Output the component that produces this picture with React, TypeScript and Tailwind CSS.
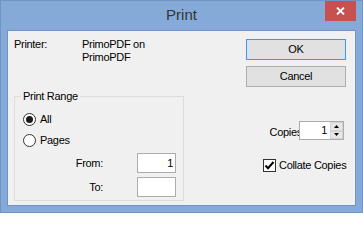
import React from "react";

function Radio({ checked }: { checked?: boolean }) {
  return (
    <div className="w-[13px] h-[13px] rounded-full border border-[#333333] bg-white flex items-center justify-center shrink-0">
      {checked && <div className="w-[7px] h-[7px] rounded-full bg-[#1a1a1a]" />}
    </div>
  );
}

export default function App() {
  return (
    <div className="w-[363px] h-[213px] bg-[#85aad8] border border-[#7094c6] flex flex-col font-['Liberation_Sans',Arial,sans-serif]">
      <div className="relative h-[29px] flex justify-center shrink-0">
        <span className="text-[15px] leading-[27px] text-[#333333]">Print</span>
        <div className="absolute top-0 right-[6px] w-[31px] h-[20px] bg-[#c75050] flex items-center justify-center">
          <svg width="9" height="8" viewBox="0 0 9 8">
            <path d="M1 0.5 L8 7.5 M8 0.5 L1 7.5" stroke="white" strokeWidth="1.8" />
          </svg>
        </div>
      </div>
      <div className="mx-[6px] mb-[6px] flex-1 border border-[#7094c6] bg-[#f0f0f0] flex text-[11px] leading-[13px] text-black tracking-[-0.3px]">
        <div className="pl-[6px] pt-[7px] flex flex-col">
          <div className="flex">
            <div className="w-[68px]">Printer:</div>
            <div>
              PrimoPDF on
              <br />
              PrimoPDF
            </div>
          </div>
          <fieldset className="mt-[26px] w-[170px] border border-[#dcdcdc] pl-[8px] pb-[3px]">
            <legend className="ml-[-2px] px-[2px] leading-[12px]">Print Range</legend>
            <div className="mt-[11px] flex items-center gap-[4px] h-[13px]">
              <Radio checked />
              <span>All</span>
            </div>
            <div className="mt-[8px] flex items-center gap-[4px] h-[13px]">
              <Radio />
              <span>Pages</span>
            </div>
            <div className="mt-[6px] flex items-center">
              <div className="w-[80px] text-right">From:</div>
              <div className="ml-[34px] w-[39px] h-[20px] border border-[#acacac] bg-white text-right pr-[2px] leading-[18px]">1</div>
            </div>
            <div className="mt-[4px] flex items-center">
              <div className="w-[80px] text-right">To:</div>
              <div className="ml-[34px] w-[39px] h-[20px] border border-[#acacac] bg-white" />
            </div>
          </fieldset>
        </div>
        <div className="ml-auto mr-[9px] w-[100px] pt-[8px] flex flex-col">
          <div className="h-[21px] border border-[#3399ff] bg-[#e1e1e1] flex items-center justify-center">OK</div>
          <div className="mt-[6px] h-[21px] border border-[#adadad] bg-[#e1e1e1] flex items-center justify-center">Cancel</div>
          <div className="mt-[34px] h-[19px] flex justify-end items-center pr-[2px]">
            <span className="mr-[-3px] pt-[3px]">Copies</span>
            <div className="relative w-[45px] h-[19px] border border-[#acacac] bg-white flex">
              <div className="flex-1 text-right pr-[3px] leading-[17px]">1</div>
              <div className="w-[13px] flex flex-col">
                <div className="flex-1 bg-[#e6e6e6] border border-[#d4d4d4] flex items-center justify-center">
                  <svg width="5" height="3" viewBox="0 0 5 3">
                    <path d="M2.5 0 L5 3 L0 3 Z" fill="#000" />
                  </svg>
                </div>
                <div className="flex-1 bg-[#e6e6e6] border border-[#d4d4d4] flex items-center justify-center">
                  <svg width="5" height="3" viewBox="0 0 5 3">
                    <path d="M0 0 L5 0 L2.5 3 Z" fill="#000" />
                  </svg>
                </div>
              </div>
            </div>
          </div>
          <div className="mt-[19px] flex items-center gap-[3px] pl-[17px] h-[13px] whitespace-nowrap">
            <div className="w-[13px] h-[13px] border border-[#333333] bg-white flex items-center justify-center shrink-0">
              <svg width="11" height="11" viewBox="0 0 11 11">
                <path d="M1.5 5.5 L4 8.2 L9.5 2" stroke="#000" strokeWidth="2" fill="none" />
              </svg>
            </div>
            <span className="whitespace-nowrap">Collate Copies</span>
          </div>
        </div>
      </div>
    </div>
  );
}
